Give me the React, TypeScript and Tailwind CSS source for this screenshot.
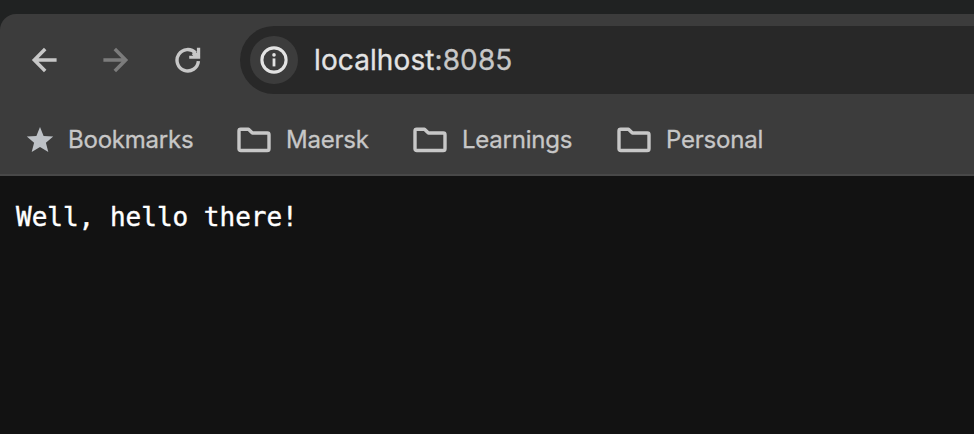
import React from "react";

function Arrow({ className }: { className: string }) {
  return (
    <svg className={className} viewBox="0 0 26 26" fill="none" stroke="currentColor" strokeWidth="3.5">
      <path d="M25.6 13H3.2M14.2 2.1L3.3 13l10.9 10.9" />
    </svg>
  );
}

function Reload() {
  return (
    <svg className="h-[26px] w-[26px] text-[#c7c7c7]" viewBox="0 0 26 26" fill="none" stroke="currentColor" strokeWidth="3.4">
      <path d="M23.4 14.2A10.7 10.7 0 1 1 20.6 6" />
      <path d="M21.9 .8H25.2V11.8H14.2V8.7H18.2L16.8 7.2L19.5 4L21.9 6Z" fill="currentColor" stroke="none" />
    </svg>
  );
}

function Folder() {
  return (
    <svg className="h-[26px] w-[34px] shrink-0 text-[#c7c7c7]" viewBox="0 0 34 26" fill="none" stroke="currentColor" strokeWidth="3.4" strokeLinejoin="round">
      <path d="M3.7 2.2H11.5L15.4 6H30.3Q32 6 32 7.7V21.7Q32 23.5 30.2 23.5H3.8Q2 23.5 2 21.7V3.9Q2 2.2 3.7 2.2Z" />
    </svg>
  );
}

function Bookmark({ label, className }: { label: string; className: string }) {
  return (
    <div className={`flex shrink-0 items-center gap-[15px] ${className}`}>
      <Folder />
      <span className="whitespace-nowrap">{label}</span>
    </div>
  );
}

export default function App() {
  return (
    <div className="flex h-[434px] w-[974px] flex-col overflow-hidden bg-[#202222] pt-[14px] font-['Inter',sans-serif]">
      <header className="flex h-[162px] shrink-0 flex-col rounded-tl-[16px] border-b-2 border-[#484848] bg-[#3c3c3c]">
        <div className="flex h-[92px] items-center pl-[31px]">
          <Arrow className="h-[26px] w-[26px] text-[#c7c7c7]" />
          <Arrow className="ml-[46px] mr-[46px] h-[26px] w-[26px] rotate-180 text-[#7c7c7c]" />
          <Reload />
          <div className="ml-[39px] flex h-[68px] flex-1 items-center rounded-l-full bg-[#282828] pl-[10px]">
            <div className="flex h-12 w-12 items-center justify-center rounded-full bg-[#3c3c3c]">
              <svg className="h-7 w-7 text-[#e3e3e3]" viewBox="0 0 28 28" fill="none" stroke="currentColor">
                <circle cx="14" cy="14" r="12.1" strokeWidth="3.1" />
                <path d="M14 12.4v8" strokeWidth="2.8" />
                <circle cx="14" cy="8.9" r="1.8" fill="currentColor" stroke="none" />
              </svg>
            </div>
            <span className="ml-4 text-[28px] leading-8 tracking-[0.1px] text-[#e3e3e3] [-webkit-text-stroke:0.3px]">
              localhost<span className="text-[#c7c7c7]">:8085</span>
            </span>
          </div>
        </div>
        <nav className="flex h-[68px] items-center pl-[26px] text-[24px] leading-8 tracking-[-0.22px] text-[#c7c7c7] [-webkit-text-stroke:0.3px]">
          <div className="flex w-[211px] shrink-0 items-center gap-[14px]">
            <svg className="h-7 w-7 text-[#bdc1c6]" viewBox="0 0 28 28" fill="currentColor">
              <path d="M14 1L17.6 9.9L27.2 10.6L19.9 16.7L22.3 26.1L14 21L5.7 26.1L8.1 16.7L.8 10.6L10.4 9.9Z" />
            </svg>
            <span className="whitespace-nowrap">Bookmarks</span>
          </div>
          <Bookmark label="Maersk" className="w-[176px]" />
          <Bookmark label="Learnings" className="w-[204px]" />
          <Bookmark label="Personal" className="w-[160px]" />
        </nav>
      </header>
      <main className="flex-1 bg-[#121212] px-4 pt-[26px]">
        <pre className="font-['DejaVu_Sans_Mono',monospace] text-[26px] leading-[30px] text-white [-webkit-text-stroke:0.4px]">Well, hello there!</pre>
      </main>
    </div>
  );
}
